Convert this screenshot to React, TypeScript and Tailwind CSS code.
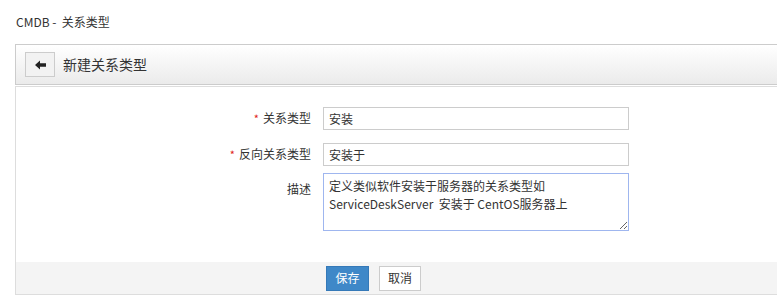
import React from "react";

const font = { fontFamily: '"Noto Sans CJK SC", "Liberation Sans", sans-serif' };

function Row({ label, required, children, top }: { label: string; required?: boolean; children: React.ReactNode; top?: boolean }) {
  return (
    <div className={`flex ${top ? "items-start" : "items-center"}`}>
      <div className={`w-[307px] shrink-0 text-right text-[12px] leading-[16px] text-[#333] pr-[12px] ${top ? "pt-[8px]" : "-mt-[2px]"}`}>
        {required && <span className="text-[#e02020] mr-[4px] text-[11px]">*</span>}
        {label}
      </div>
      {children}
    </div>
  );
}

export default function App() {
  return (
    <div className="w-[777px] h-[300px] overflow-hidden bg-white text-[#333]" style={font}>
      <div className="h-[44px] flex items-center pl-[16px] text-[12px] text-[#333]">CMDB - &nbsp;关系类型</div>
      <div className="ml-[15px] w-[780px]">
        <div className="h-[41px] border border-[#cccccc] bg-gradient-to-b from-white to-[#ebebeb] flex items-center pl-[9px]">
          <button className="w-[30px] h-[25px] border border-[#cccccc] bg-[#f2f2f2] flex items-center justify-center">
            <svg width="11" height="10" viewBox="0 0 11 10">
              <path d="M0 5 L5 0.5 L5 3.3 L11 3.3 L11 6.7 L5 6.7 L5 9.5 Z" fill="#222" />
            </svg>
          </button>
          <span className="ml-[8px] text-[14px] text-[#333]">新建关系类型</span>
        </div>
        <div className="mt-[1px] border border-[#dddddd] border-r-0">
          <div className="pt-[20px] pb-[31px] flex flex-col">
            <Row label="关系类型" required>
              <div className="w-[306px] h-[23px] border border-[#cccccc] flex items-center pl-[5px] text-[12px]">安装</div>
            </Row>
            <div className="h-[13px]" />
            <Row label="反向关系类型" required>
              <div className="w-[306px] h-[23px] border border-[#cccccc] flex items-center pl-[5px] text-[12px]">安装于</div>
            </Row>
            <div className="h-[7px]" />
            <Row label="描述" top>
              <textarea
                className="w-[306px] h-[58px] border border-[#9fb6ef] outline-none px-[5px] pt-[3px] text-[12px] leading-[18px] text-[#333] resize"
                style={font}
                defaultValue={"定义类似软件安装于服务器的关系类型如\nServiceDeskServer  安装于 CentOS服务器上"}
              />
            </Row>
          </div>
          <div className="h-[32px] bg-[#f4f4f4] flex items-center pl-[310px] gap-[10px]">
            <button className="w-[43px] h-[25px] bg-[#3f88c8] border border-[#3579b8] text-white text-[12px]">保存</button>
            <button className="w-[42px] h-[25px] bg-white border border-[#cccccc] text-[#333] text-[12px]">取消</button>
          </div>
        </div>
      </div>
    </div>
  );
}
